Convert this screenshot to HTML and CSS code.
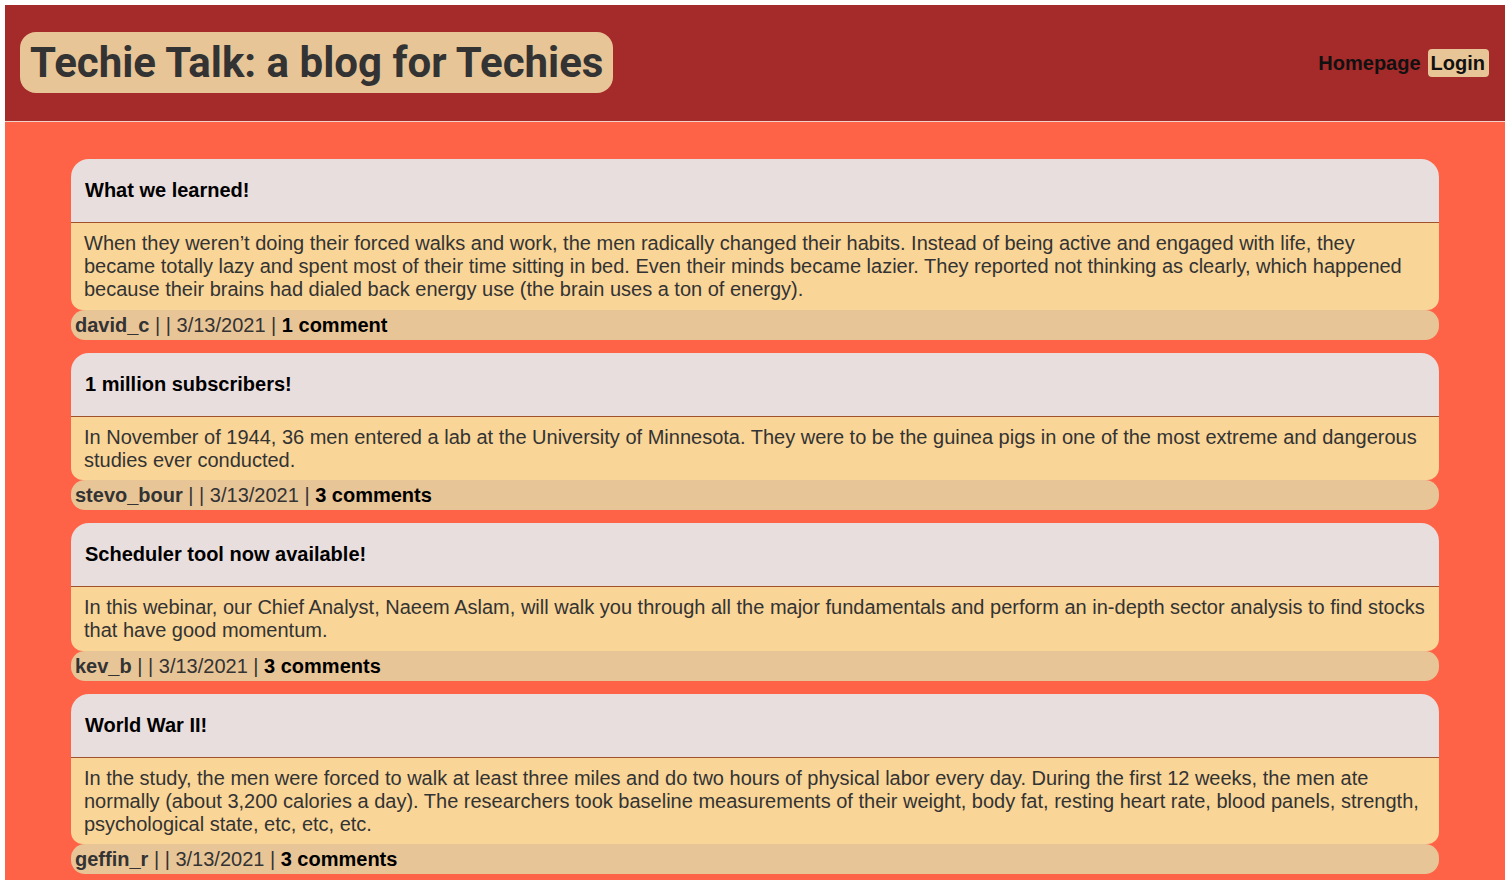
FILE: index.html
```html
<!DOCTYPE html>
<html lang="en">
<head>
<meta charset="utf-8">
<title>Techie Talk</title>
<link rel="stylesheet" href="styles.css">
</head>
<body>
<header class="site-header">
  <h1 class="site-title">Techie Talk: a blog for Techies</h1>
  <nav class="nav">
    <a class="nav-link" href="#">Homepage</a>
    <a class="nav-link nav-login" href="#">Login</a>
  </nav>
</header>
<main class="posts">
  <article class="post">
    <h2 class="post-title">What we learned!</h2>
    <p class="post-body">When they weren’t doing their forced walks and work, the men radically changed their habits. Instead of being active and engaged with life, they became totally lazy and spent most of their time sitting in bed. Even their minds became lazier. They reported not thinking as clearly, which happened because their brains had dialed back energy use (the brain uses a ton of energy).</p>
    <div class="post-meta"><span class="author">david_c</span> | | 3/13/2021 | <a class="comments" href="#">1 comment</a></div>
  </article>
  <article class="post">
    <h2 class="post-title">1 million subscribers!</h2>
    <p class="post-body">In November of 1944, 36 men entered a lab at the University of Minnesota. They were to be the guinea pigs in one of the most extreme and dangerous studies ever conducted.</p>
    <div class="post-meta"><span class="author">stevo_bour</span> | | 3/13/2021 | <a class="comments" href="#">3 comments</a></div>
  </article>
  <article class="post">
    <h2 class="post-title">Scheduler tool now available!</h2>
    <p class="post-body">In this webinar, our Chief Analyst, Naeem Aslam, will walk you through all the major fundamentals and perform an in-depth sector analysis to find stocks that have good momentum.</p>
    <div class="post-meta"><span class="author">kev_b</span> | | 3/13/2021 | <a class="comments" href="#">3 comments</a></div>
  </article>
  <article class="post">
    <h2 class="post-title">World War II!</h2>
    <p class="post-body">In the study, the men were forced to walk at least three miles and do two hours of physical labor every day. During the first 12 weeks, the men ate normally (about 3,200 calories a day). The researchers took baseline measurements of their weight, body fat, resting heart rate, blood panels, strength, psychological state, etc, etc, etc.</p>
    <div class="post-meta"><span class="author">geffin_r</span> | | 3/13/2021 | <a class="comments" href="#">3 comments</a></div>
  </article>
</main>
</body>
</html>
```

FILE: styles.css
```css
html {
  background: #ffffff;
}

body {
  margin: 5px 0 0 5px;
  font-family: "Liberation Sans", Arial, sans-serif;
  background: #ff6347;
  color: #333;
}

.site-header {
  background: #a52a2a;
  height: 117px;
  box-sizing: border-box;
  padding: 0 16px 0 15px;
  display: flex;
  align-items: center;
  justify-content: space-between;
  border-bottom: 1px solid #efd3c8;
}

.site-title {
  margin: 0;
  font-family: Roboto, "Liberation Sans", sans-serif;
  font-weight: 700;
  font-size: 42px;
  line-height: 49px;
  color: #333;
  background: #e8c597;
  border-radius: 16px;
  padding: 6px 10px;
  transform: translateY(-1px);
}

.nav {
  display: flex;
  align-items: center;
  gap: 7px;
}

.nav-link {
  font-size: 20px;
  font-weight: 700;
  color: #111;
  text-decoration: none;
  line-height: 28px;
}

.nav-login {
  background: #e8c597;
  border-radius: 4px;
  padding: 0 4px 0 3px;
}

.posts {
  padding: 37px 66px 20px 66px;
  display: flex;
  flex-direction: column;
  gap: 13px;
}

.post {
  display: flex;
  flex-direction: column;
}

.post-title {
  margin: 0;
  background: #e9dede;
  font-size: 20px;
  font-weight: 700;
  color: #000;
  line-height: 23px;
  padding: 20px 14px;
  border-radius: 18px 18px 0 0;
  border-bottom: 1px solid #a0522d;
}

.post-body {
  margin: 0;
  background: #f9d597;
  font-size: 20px;
  line-height: normal;
  padding: 9px 13px 8.6px 13px;
  border-radius: 0 0 12px 12px;
  color: #333;
}

.post-meta {
  background: #e8c597;
  border-radius: 14px;
  font-size: 20px;
  line-height: 30px;
  padding: 0 4px;
  color: #333;
}

.author {
  font-weight: 700;
}

.comments {
  font-weight: 700;
  color: #000;
  text-decoration: none;
}
```
